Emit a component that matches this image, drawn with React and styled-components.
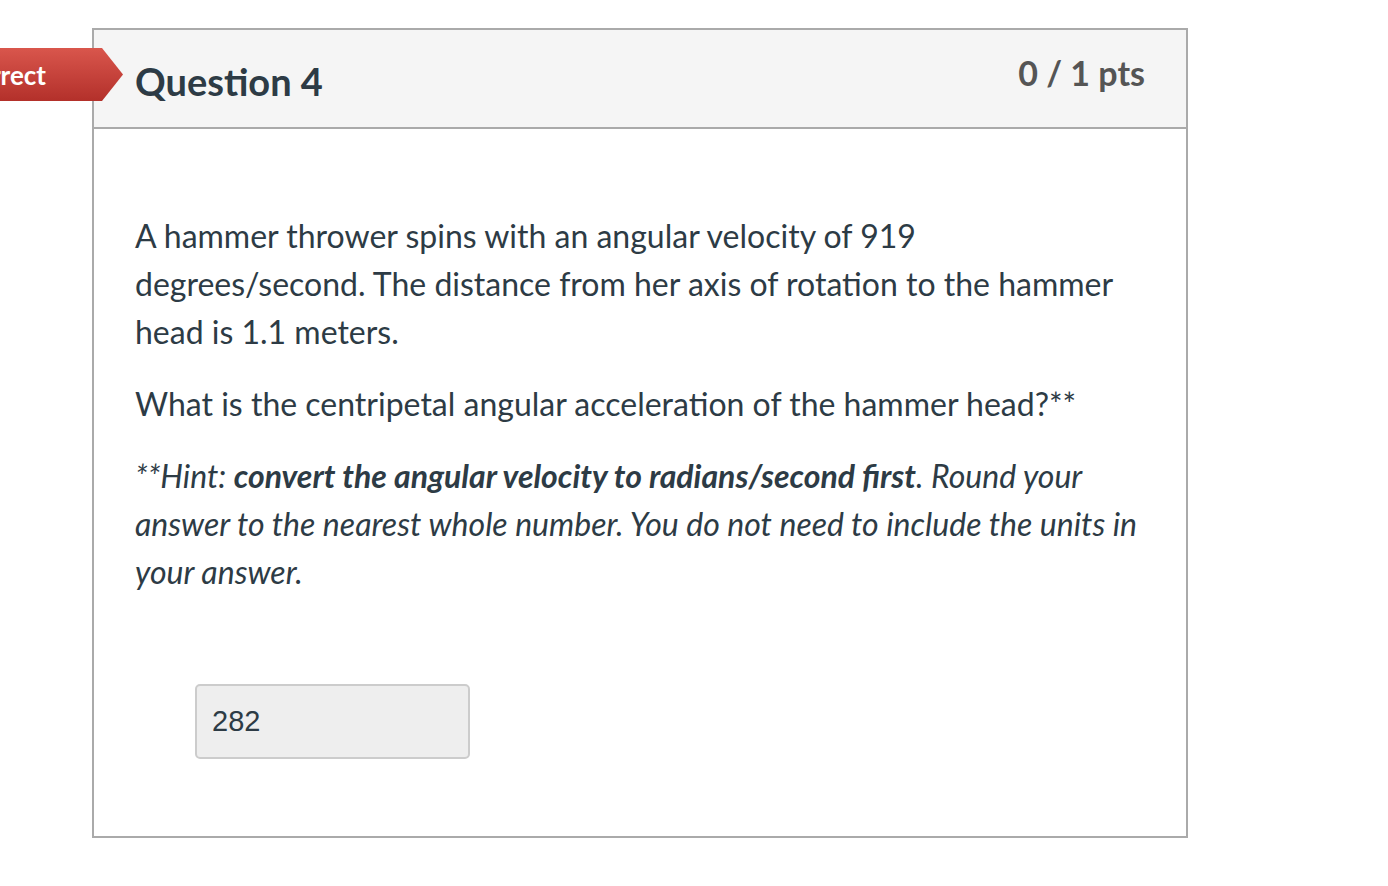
import styled, { createGlobalStyle } from "styled-components";

const GlobalStyle = createGlobalStyle`
  body {
    margin: 0;
    background: #ffffff;
    font-family: "Lato", "Noto Sans", sans-serif;
    color: #2d3b45;
  }
`;

const Page = styled.div`
  padding: 28px 0 0 92px;
  width: 1388px;
  box-sizing: border-box;
`;

const Card = styled.div`
  position: relative;
  width: 1096px;
  border: 2px solid #aaaaaa;
  background: #ffffff;
  box-sizing: border-box;
`;

const ResultTag = styled.div`
  position: absolute;
  top: 18px;
  right: calc(100% - 29px);
  height: 53px;
  display: flex;
  align-items: center;
  padding: 0 77px 0 20px;
  background: linear-gradient(to bottom, #d9564c 0%, #c4413a 55%, #b3302a 100%);
  clip-path: polygon(0 0, calc(100% - 21px) 0, 100% 50%, calc(100% - 21px) 100%, 0 100%);
  color: #ffffff;
  font-size: 26px;
  font-weight: 700;
  white-space: nowrap;
`;

const Header = styled.div`
  display: flex;
  justify-content: space-between;
  align-items: flex-start;
  height: 99px;
  padding: 23px 41px 0 41px;
  box-sizing: border-box;
  background: #f5f5f5;
  border-bottom: 2px solid #aaaaaa;
`;

const Title = styled.h2`
  margin: 6px 0 0;
  font-size: 38px;
  line-height: 1.2;
  font-weight: 700;
  color: #2d3b45;
`;

const Points = styled.div`
  font-size: 34px;
  line-height: 1.2;
  font-weight: 700;
  color: #555555;
`;

const Body = styled.div`
  padding: 83px 41px 77px 41px;
`;

const Text = styled.p`
  margin: 0 0 24px;
  font-size: 32px;
  line-height: 48px;
  color: #2d3b45;

  &:last-of-type {
    margin-bottom: 0;
  }
`;

const Hint = styled(Text)`
  font-style: italic;
`;

const AnswerBox = styled.div`
  margin: 88px 0 0 60px;
  width: 275px;
  height: 75px;
  display: flex;
  align-items: center;
  padding: 0 15px;
  box-sizing: border-box;
  background: #eeeeee;
  border: 2px solid #cccccc;
  border-radius: 5px;
  font-family: "Liberation Sans", Arial, sans-serif;
  font-size: 29px;
  color: #2d3b45;
`;

export default function App() {
  return (
    <>
      <GlobalStyle />
      <Page>
        <Card>
          <ResultTag>Incorrect</ResultTag>
          <Header>
            <Title>Question 4</Title>
            <Points>0 / 1 pts</Points>
          </Header>
          <Body>
            <Text>
              A hammer thrower spins with an angular velocity of 919
              degrees/second. The distance from her axis of rotation to the
              hammer head is 1.1 meters.
            </Text>
            <Text>
              What is the centripetal angular acceleration of the hammer head?**
            </Text>
            <Hint>
              **Hint: <strong>convert the angular velocity to radians/second first</strong>.
              Round your answer to the nearest whole number. You do not need to
              include the units in your answer.
            </Hint>
            <AnswerBox>282</AnswerBox>
          </Body>
        </Card>
      </Page>
    </>
  );
}
